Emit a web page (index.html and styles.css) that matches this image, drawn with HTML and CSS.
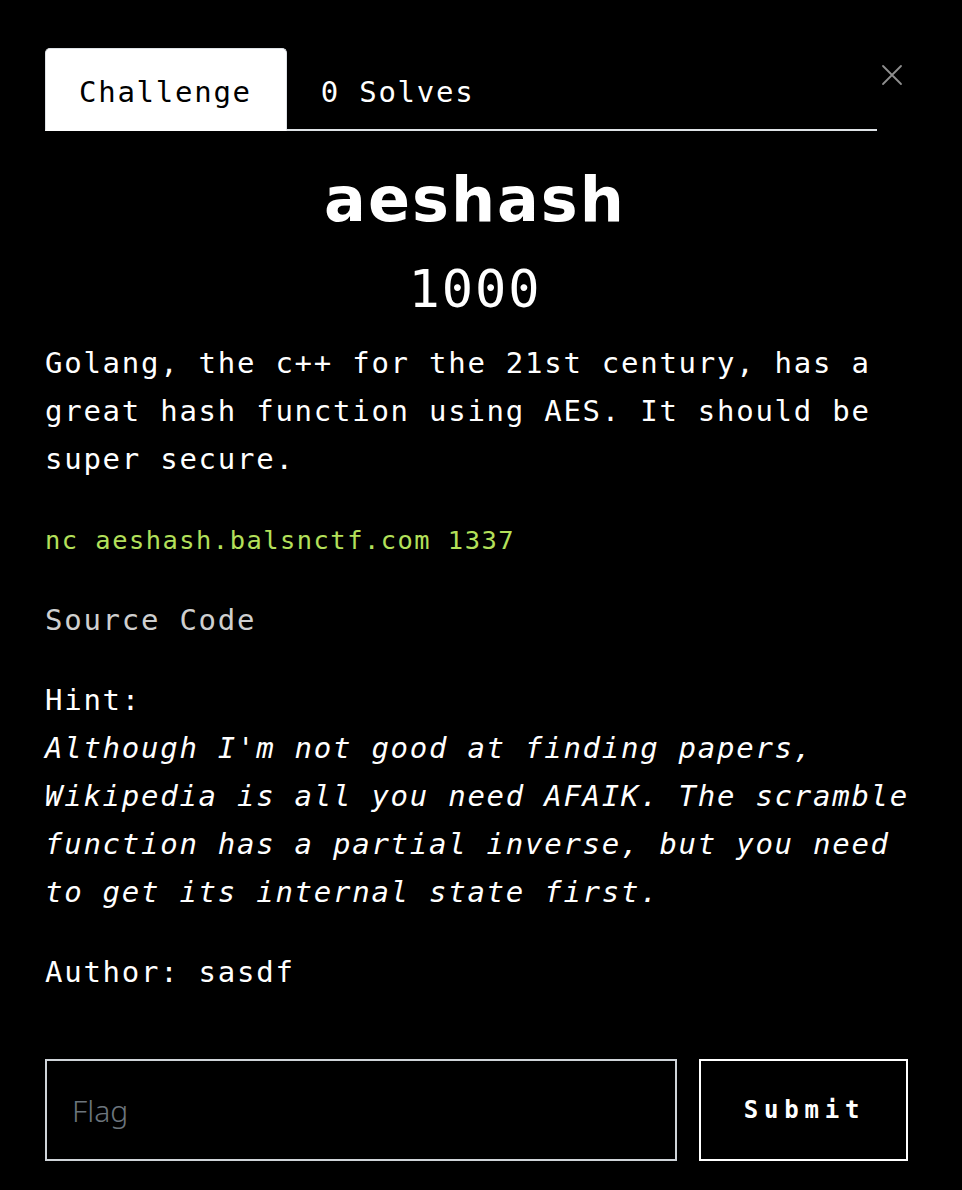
FILE: index.html
```html
<!DOCTYPE html>
<html lang="en">
<head>
<meta charset="utf-8">
<title>aeshash</title>
<link rel="stylesheet" href="styles.css">
</head>
<body>
<div class="modal">
  <div class="modal-header">
    <ul class="tabs">
      <li class="tab active">Challenge</li>
      <li class="tab">0 Solves</li>
    </ul>
    <button class="close" aria-label="Close">
      <svg width="22" height="22" viewBox="0 0 22 22"><path d="M2 2 L20 20 M20 2 L2 20" stroke="#8f8f8f" stroke-width="1.8" stroke-linecap="round" fill="none"/></svg>
    </button>
  </div>
  <h1 class="chal-name">aeshash</h1>
  <h2 class="chal-value">1000</h2>
  <div class="desc">
    <p>Golang, the c++ for the 21st century, has a great hash function using AES. It should be super secure.</p>
    <p><code class="cmd">nc aeshash.balsnctf.com 1337</code></p>
    <p class="src">Source Code</p>
    <p>Hint:<br><em>Although I'm not good at finding papers, Wikipedia is all you need AFAIK. The scramble function has a partial inverse, but you need to get its internal state first.</em></p>
    <p>Author: sasdf</p>
  </div>
  <form class="submit-row">
    <input class="flag-input" type="text" placeholder="Flag">
    <button class="submit-btn" type="button">Submit</button>
  </form>
</div>
</body>
</html>
```
FILE: styles.css
```css
html, body {
  margin: 0;
  padding: 0;
  background: #000;
  color: #fff;
}
.modal {
  width: 872px;
  padding: 48px 45px 30px 45px;
  font-family: "DejaVu Sans Mono", "Liberation Mono", monospace;
  font-size: 29px;
  letter-spacing: 1.74px;
  line-height: 48px;
}
.modal-header {
  display: flex;
  align-items: flex-start;
}
.tabs {
  list-style: none;
  margin: 0;
  padding: 0;
  display: flex;
  width: 832px;
  border-bottom: 2px solid #dee2e6;
}
.tab {
  padding: 20px 34px 13px 34px;
  color: #fff;
  border-radius: 5px 5px 0 0;
  margin-bottom: -2px;
}
.tab.active {
  background: #fff;
  color: #000;
  border: 1px solid #dee2e6;
  border-bottom: 2px solid #fff;
  padding: 19px 34px 13px 33px;
}
.close {
  background: none;
  border: none;
  padding: 0;
  margin: 16px 0 0 4px;
  width: 22px;
  height: 22px;
  cursor: pointer;
}
.close svg { display: block; }
.chal-name {
  margin: 25px 12px 0 0;
  text-align: center;
  font-family: "DejaVu Sans", "Liberation Sans", sans-serif;
  font-weight: bold;
  font-size: 62px;
  letter-spacing: 2px;
  line-height: 88px;
}
.chal-value {
  margin: 10px 12px 0 0;
  text-align: center;
  font-weight: normal;
  font-size: 52px;
  letter-spacing: 2px;
  line-height: 70px;
}
.desc {
  margin-top: 15px;
}
.desc p {
  margin: 0 0 32px 0;
}
.desc em { font-style: italic; }
.cmd {
  color: #b4e05a;
  font-family: "DejaVu Sans Mono", monospace;
  font-size: 25.4px;
  letter-spacing: 1.5px;
}
.src { color: #cfcfcf; }
.submit-row {
  display: flex;
  gap: 22px;
  margin-top: 63px;
  width: 863px;
}
.flag-input {
  flex: 0 0 632px;
  box-sizing: border-box;
  height: 102px;
  background: #000;
  border: 2px solid #cfd4d9;
  border-radius: 0;
  padding: 0 25px;
  color: #fff;
  font-family: "Noto Sans", "Open Sans", sans-serif;
  font-weight: 300;
  font-size: 30px;
  outline: none;
}
.flag-input::placeholder { color: #6c757d; }
.submit-btn {
  flex: 0 0 209px;
  box-sizing: border-box;
  height: 102px;
  background: #000;
  color: #fff;
  border: 2px solid #fff;
  border-radius: 0;
  font-family: "DejaVu Sans Mono", monospace;
  font-weight: bold;
  font-size: 24px;
  letter-spacing: 5.8px;
  padding: 0 0 0 2px;
}
```
